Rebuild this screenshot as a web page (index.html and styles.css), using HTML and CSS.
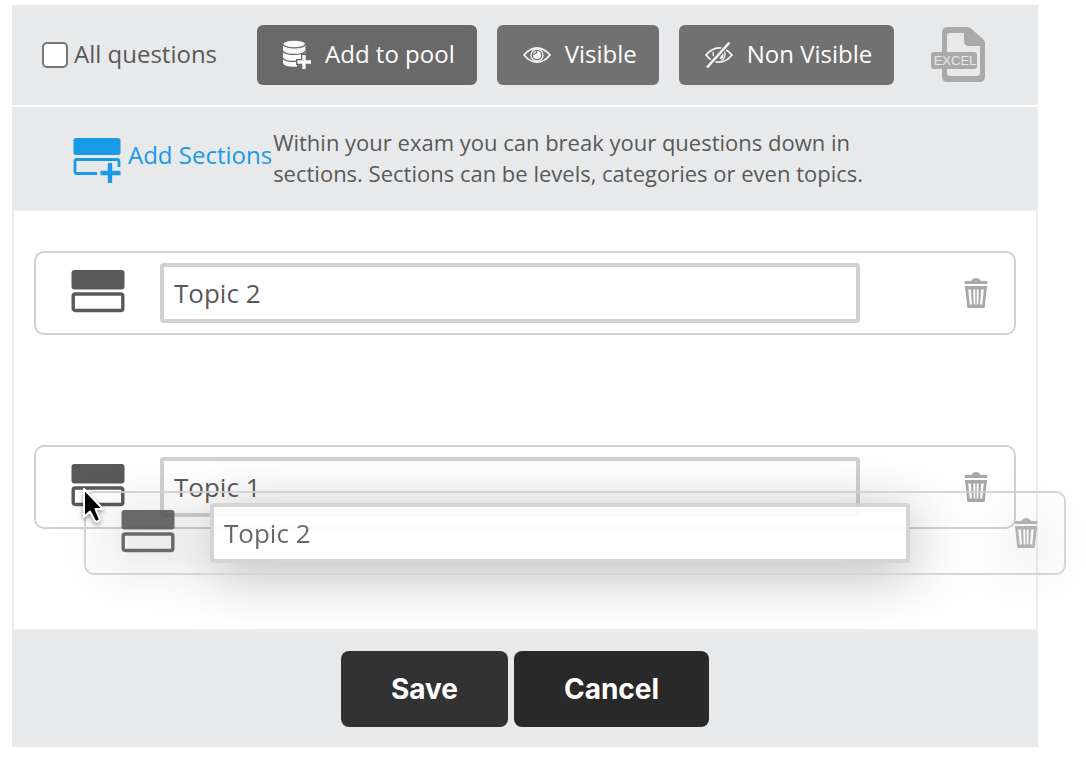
FILE: index.html
```html
<!DOCTYPE html>
<html lang="en">
<head>
    <meta charset="UTF-8">
    <meta name="viewport" content="width=device-width, initial-scale=1.0">
    <title>Exam Questions</title>
    <link rel="stylesheet" href="styles.css">
</head>
<body>
    <!-- Shared icons -->
    <svg class="icon-defs" width="0" height="0" aria-hidden="true">
        <symbol id="icon-section" viewBox="0 0 56 46">
            <rect x="1.500" y="0" width="53" height="19.500" rx="3" fill="currentColor"/>
            <rect x="3.200" y="24" width="49.600" height="16.500" rx="2" fill="none" stroke="currentColor" stroke-width="3.400"/>
        </symbol>
        <symbol id="icon-trash" viewBox="0 0 24 30">
            <path fill="currentColor" d="M8 2Q9 0 12 0t4 2l1 1h5.500q1 0 1 1.500T22.500 6h-21Q.5 6 .5 4.500T1.500 3H7z"/>
            <path fill="currentColor" fill-rule="evenodd" d="M1 8h22l-2.200 21q-.1 1-1 1H4.200q-.9 0-1-1zM4.200 11.500l1.500 15h2.200l-1-15zM9.300 11.500l.4 15h1.600v-15zM12.700 11.500v15h1.600l.4-15zM17.100 11.500l-1 15h2.200l1.500-15z"/>
        </symbol>
    </svg>

    <form class="exam-panel">
        <div class="toolbar">
            <label class="all-questions" for="allQuestions">
                <input type="checkbox" id="allQuestions">
                <span>All questions</span>
            </label>
            <div class="toolbar-actions">
                <button type="button" class="tool-button pool">
                    <svg width="28" height="32" viewBox="0 0 30 32" aria-hidden="true">
                        <path fill="#f8f9f9" d="M0 5v19.500Q1 28.500 12 28.500h3V24h5V5z"/>
                        <ellipse cx="12" cy="4.500" rx="12" ry="3.800" fill="#f8f9f9"/>
                        <path fill="#f8f9f9" d="M19 5h5v14h-5z"/>
                        <path fill="none" stroke="#696969" stroke-width="1.300" d="M0 4.500q1 3.800 12 3.800t12-3.800M0 11.500q1 3.800 12 3.800t12-3.800M0 19q1 3.800 12 3.800 3 0 6-.4"/>
                        <path fill="none" stroke="#696969" stroke-width="6.500" d="M22.500 14v18M14 23.500h16"/>
                        <path fill="none" stroke="#f8f9f9" stroke-width="3.600" d="M22.500 16v15M15.500 23.500H30"/>
                    </svg>
                    <span>Add to pool</span>
                </button>
                <button type="button" class="tool-button">
                    <svg width="28" height="28" viewBox="0 0 28 28" fill="none" stroke="#f8f9f9" aria-hidden="true">
                        <path stroke-width="1.800" d="M1 14Q7 6.800 14 6.800T27 14Q21 21.200 14 21.200T1 14z"/>
                        <circle cx="14" cy="14" r="6" stroke-width="1.300"/>
                        <circle cx="14" cy="14" r="4" fill="#f8f9f9" stroke="none"/>
                        <path stroke="#717171" stroke-width="1.300" d="M13.500 10q.5 3-3.500 3.500"/>
                    </svg>
                    <span>Visible</span>
                </button>
                <button type="button" class="tool-button">
                    <svg width="28" height="28" viewBox="0 0 28 28" fill="none" stroke="#f8f9f9" aria-hidden="true">
                        <path stroke-width="1.800" d="M1 14Q7 6.800 14 6.800T27 14Q21 21.200 14 21.200T1 14z"/>
                        <path stroke-width="1.300" d="M8.200 11q-.8 3.500 1.500 6.500M19.500 10.500q2 5.500-3 9"/>
                        <path stroke-width="2.200" d="M17.200 12.500q1.200 3.500-2.500 5"/>
                        <path stroke="#717171" stroke-width="5" d="M2 26.500 24.500 1.500"/>
                        <path stroke-width="2.600" d="M2 26.500 24.500 1.500"/>
                    </svg>
                    <span>Non Visible</span>
                </button>
            </div>
            <button type="button" class="excel-button" aria-label="Export to Excel">
                <svg width="56" height="56" viewBox="0 0 56 56" aria-hidden="true">
                    <path fill="#a9a9a9" fill-rule="evenodd" d="M17 0h20q2 0 4 1.500L53 12q2 2 2 4v33q0 6-6 6H17q-5 0-5-6V6q0-6 5-6zM20 6q-3 0-3 3v37q0 3 3 3h27q3 0 3-3V19H39q-5 0-5-5V6z"/>
                    <rect x="17" y="23" width="33" height="20" fill="#e8e9eb"/>
                    <rect x="1" y="25" width="46" height="17" rx="3" fill="#a9a9a9"/>
                    <text class="excel-label" x="25" y="38" text-anchor="middle">EXCEL</text>
                </svg>
            </button>
        </div>

        <div class="sections-bar">
            <a href="#" class="add-sections">
                <svg width="50" height="46" viewBox="0 0 50 46" aria-hidden="true">
                    <rect x="1.500" y="0" width="47" height="17" rx="2.500" fill="currentColor"/>
                    <path fill="none" stroke="currentColor" stroke-width="2.800" d="M25 35.500H5q-2 0-2-2v-10q0-2 2-2h40q2 0 2 2V29"/>
                    <path fill="none" stroke="currentColor" stroke-width="4.400" d="M38 25v20M28.500 35h20"/>
                </svg>
                <span>Add Sections</span>
            </a>
            <p class="sections-info">Within your exam you can break your questions down in sections. Sections can be levels, categories or even topics.</p>
        </div>

        <div class="topic-list">
            <div class="topic-row">
                <svg class="drag-handle" aria-hidden="true"><use href="#icon-section"/></svg>
                <input type="text" class="topic-name" value="Topic 2" aria-label="Section name">
                <button type="button" class="delete-button" aria-label="Delete section">
                    <svg width="24" height="30" aria-hidden="true"><use href="#icon-trash"/></svg>
                </button>
            </div>
            <div class="topic-row">
                <svg class="drag-handle" aria-hidden="true"><use href="#icon-section"/></svg>
                <input type="text" class="topic-name" value="Topic 1" aria-label="Section name">
                <button type="button" class="delete-button" aria-label="Delete section">
                    <svg width="24" height="30" aria-hidden="true"><use href="#icon-trash"/></svg>
                </button>
            </div>

            <!-- Row being dragged -->
            <div class="topic-row dragging">
                <svg class="drag-handle" aria-hidden="true"><use href="#icon-section"/></svg>
                <input type="text" class="topic-name" value="Topic 2" aria-label="Section name">
                <button type="button" class="delete-button" aria-label="Delete section">
                    <svg width="24" height="30" aria-hidden="true"><use href="#icon-trash"/></svg>
                </button>
            </div>
            <svg class="cursor" width="26" height="40" viewBox="0 0 26 40" aria-hidden="true">
                <path fill="#000" stroke="#fff" stroke-width="2" stroke-linejoin="round" d="M2 2v28l6-5.500 5 9.500q1 1 2.500.5l1.500-1q1-1 .5-2L13.500 22H21z"/>
            </svg>
        </div>

        <div class="panel-footer">
            <button type="submit" class="save-button">Save</button>
            <button type="button" class="cancel-button">Cancel</button>
        </div>
    </form>
</body>
</html>
```
FILE: styles.css
```css
* {
    margin: 0;
    padding: 0;
    box-sizing: border-box;
}

body {
    background-color: #fff;
    color: #595959;
    font-family: "Open Sans", "Noto Sans", sans-serif;
    font-size: 24px;
    padding: 5px 48px 20px 12px;
}

button {
    border: none;
    font-family: inherit;
    cursor: pointer;
}

svg {
    display: block;
    flex-shrink: 0;
}

.icon-defs {
    position: absolute;
}

.toolbar {
    display: flex;
    align-items: center;
    background-color: #e8e9eb;
    padding: 20px 52px 20px 30px;
}

.all-questions {
    display: flex;
    align-items: center;
    gap: 6px;
    white-space: nowrap;
}

.all-questions span,
.tool-button span {
    padding-bottom: 4px;
}

.all-questions input {
    appearance: none;
    width: 26px;
    height: 26px;
    background-color: #fff;
    border: 2px solid #767676;
    border-radius: 5px;
}

.toolbar-actions {
    display: flex;
    gap: 20px;
    margin-left: 40px;
}

.tool-button {
    display: flex;
    align-items: center;
    gap: 14px;
    height: 60px;
    padding: 0 22px 0 26px;
    background-color: #717171;
    border-radius: 6px;
    color: #fff;
    font-size: 24px;
    white-space: nowrap;
}

.tool-button.pool {
    background-color: #696969;
}

.excel-button {
    background: none;
    margin-left: auto;
}

.excel-label {
    fill: #e8e9eb;
    font-family: "Liberation Sans", Arial, sans-serif;
    font-size: 13px;
}

.sections-bar {
    display: flex;
    align-items: center;
    background-color: #e8e9eb;
    margin-top: 2px;
    padding: 20px 60px;
}

.add-sections {
    display: flex;
    align-items: center;
    gap: 6px;
    color: #189ae8;
    text-decoration: none;
    white-space: nowrap;
}

.add-sections svg {
    margin-top: 6px;
}

.add-sections span {
    padding-bottom: 8px;
}

.sections-info {
    max-width: 620px;
    margin-left: 1px;
    font-size: 22px;
    line-height: 31px;
}

.topic-list {
    position: relative;
    display: flex;
    flex-direction: column;
    gap: 110px;
    padding: 40px 20px 100px;
    border: 2px solid #ededee;
}

.topic-row {
    display: flex;
    align-items: center;
    height: 84px;
    padding: 0 26px 0 34px;
    border: 2px solid #d1d1d1;
    border-radius: 10px;
}

.drag-handle {
    width: 56px;
    height: 46px;
    margin-right: 34px;
    cursor: move;
}

.topic-name {
    flex: 1;
    min-width: 0;
    height: 60px;
    padding: 0 10px;
    background-color: #fff;
    border: 4px solid #d1d1d1;
    border-radius: 4px;
    color: #595959;
    font-family: inherit;
    font-size: 26px;
}

.delete-button {
    margin-left: 104px;
    background: none;
    color: #a9a9a9;
}

.topic-row.dragging {
    position: absolute;
    top: 280px;
    left: 70px;
    right: -30px;
    opacity: 0.9;
    filter: drop-shadow(0 10px 28px rgba(0, 0, 0, 0.3));
}

.cursor {
    position: absolute;
    top: 276px;
    left: 68px;
    filter: drop-shadow(0 2px 2px rgba(0, 0, 0, 0.4));
}

.panel-footer {
    display: flex;
    justify-content: center;
    gap: 6px;
    background-color: #e8e9eb;
    padding: 20px;
}

.save-button,
.cancel-button {
    height: 76px;
    padding: 0 50px;
    border-radius: 8px;
    background-color: #323232;
    color: #fff;
    font-family: Inter, sans-serif;
    font-size: 28px;
    font-weight: bold;
}

.cancel-button {
    background-color: #292929;
}
```
